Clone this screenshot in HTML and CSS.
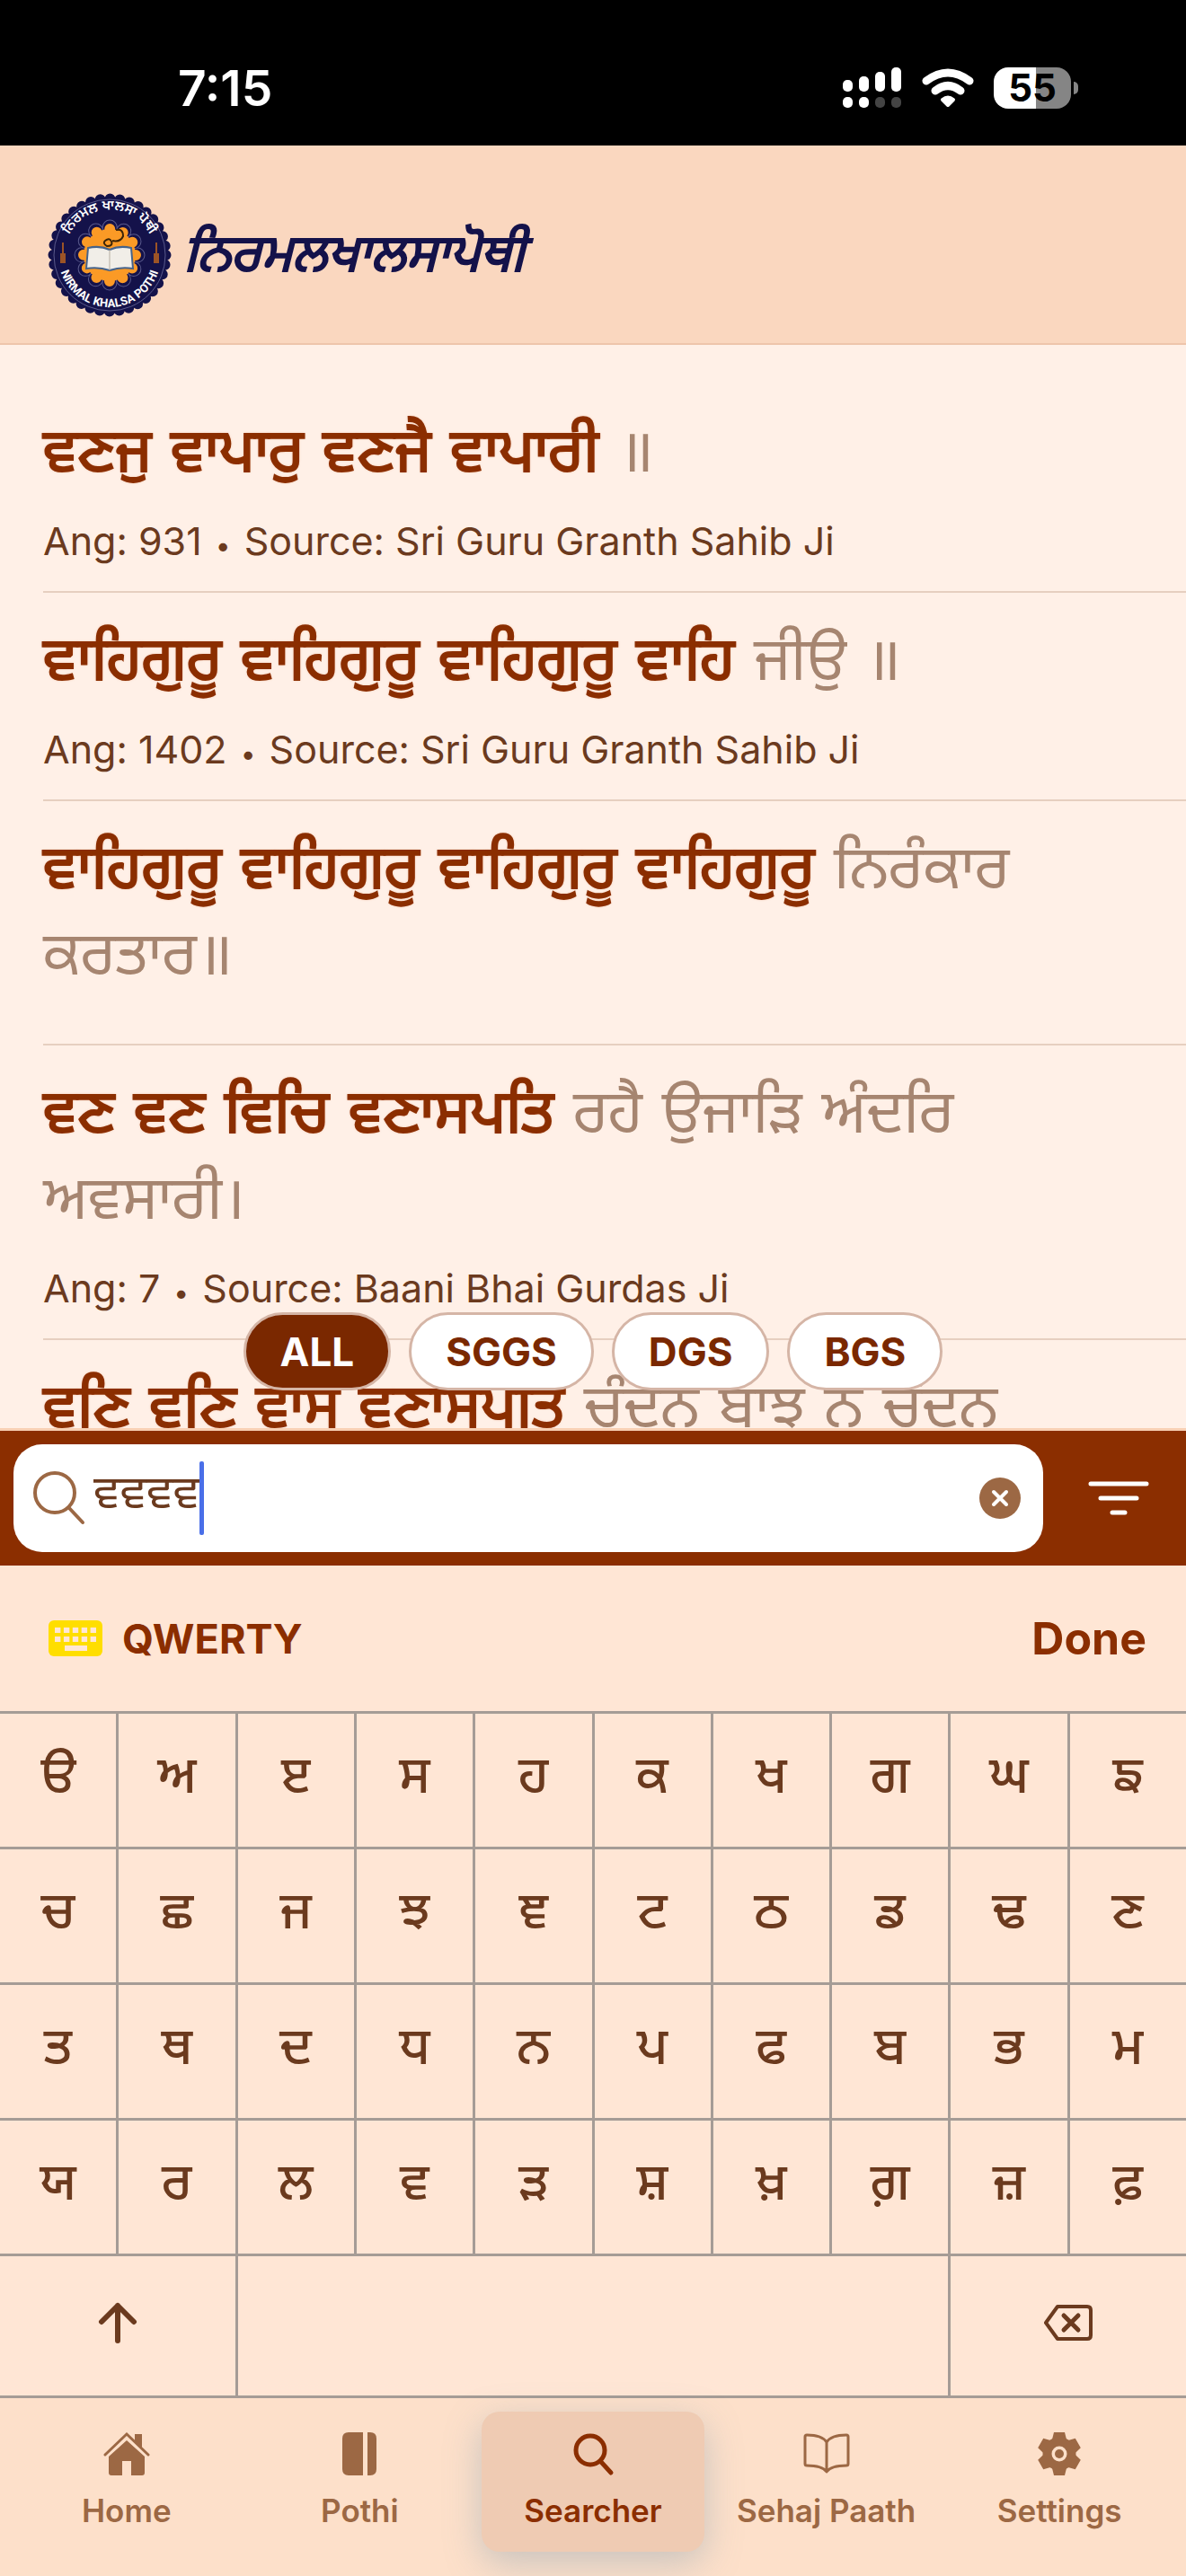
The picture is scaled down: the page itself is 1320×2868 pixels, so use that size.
FILE: index.html
```html
<!DOCTYPE html>
<html lang="pa">
<head>
    <meta charset="UTF-8">
    <meta name="viewport" content="width=device-width, initial-scale=1.0">
    <title>Nirmal Khalsa Pothi</title>
    <link rel="stylesheet" href="styles.css">
</head>
<body>

    <div class="status">
        <span class="clock">7:15</span>
        <svg class="signal" viewBox="0 0 66 46" fill="#fff">
            <rect x="0" y="14" width="11" height="13" rx="5"/>
            <rect x="18" y="10" width="11" height="17" rx="5"/>
            <rect x="36" y="5" width="11" height="22" rx="5"/>
            <rect x="54" y="0" width="11" height="27" rx="5"/>
            <rect x="0" y="33" width="11" height="12" rx="5"/>
            <rect x="18" y="33" width="11" height="12" rx="5"/>
            <rect x="36" y="33" width="11" height="12" rx="5" fill="#444"/>
            <rect x="54" y="33" width="11" height="12" rx="5" fill="#444"/>
        </svg>
        <svg class="wifi" viewBox="0 0 58 44" fill="none" stroke="#fff" stroke-width="9" stroke-linecap="round">
            <path d="M5 14Q29-4 53 14M15 25Q29 14 43 25"/>
            <path d="M29 41l-6-6q6-5 12 0z" fill="#fff" stroke-width="4" stroke-linejoin="round"/>
        </svg>
        <span class="battery">55</span>
        <span class="battery-tip"></span>
    </div>

    <header class="header">
        <svg class="emblem" viewBox="-70 -70 140 140">
            <circle r="62.500" fill="none" stroke="#14124a" stroke-width="12" stroke-linecap="round" stroke-dasharray="0 10.908"/>
            <circle r="62" fill="#14124a" stroke="#5a5a8c" stroke-width="1"/>
            <circle r="31" fill="none" stroke="#5a5a8c" stroke-width="17" stroke-linecap="round" stroke-dasharray="0 16.231"/>
            <circle r="31" fill="none" stroke="#14124a" stroke-width="15" stroke-linecap="round" stroke-dasharray="0 16.231"/>
            <circle r="29" fill="#fb9a26"/>
            <circle r="29" fill="none" stroke="#fb9a26" stroke-width="12" stroke-linecap="round" stroke-dasharray="0 15.184"/>
            <path d="M-24-8q13-3 24 2 11-5 24-2l2 23q-14-2-26 2-12-4-26-2z" fill="#f1eee8" stroke="#46638a" stroke-width="2"/>
            <path d="M0-6v23" stroke="#b5ada0" stroke-width="1"/>
            <path d="M-5-16q5-4 7 1t-5 5q-5-3-2-6M3-16q9 2 12-5 0-9-8-7" fill="none" stroke="#3b2408" stroke-width="2"/>
            <path d="M-52-14v14M52-14v14" stroke="#9c5426" stroke-width="2"/>
            <path d="M-52-2v11M52-2v11" stroke="#9c5426" stroke-width="6"/>
            <path id="arcTop" d="M-46-20A50 50 0 0 1 46-20" fill="none"/>
            <path id="arcBottom" d="M-55 16A57 57 0 0 0 55 16" fill="none"/>
            <text class="seal-pa" text-anchor="middle"><textPath href="#arcTop" startOffset="50%">ਨਿਰਮਲ ਖਾਲਸਾ ਪੋਥੀ</textPath></text>
            <text class="seal-en" text-anchor="middle"><textPath href="#arcBottom" startOffset="50%">NIRMAL KHALSA POTHI</textPath></text>
        </svg>
        <h1 class="brand">ਨਿਰਮਲਖਾਲਸਾਪੋਥੀ</h1>
    </header>

    <main class="results">
        <article class="result">
            <p class="line"><b>ਵਣਜੁ ਵਾਪਾਰੁ ਵਣਜੈ ਵਾਪਾਰੀ</b> ॥</p>
            <p class="meta">Ang: 931 <i>•</i> Source: Sri Guru Granth Sahib Ji</p>
        </article>
        <article class="result">
            <p class="line"><b>ਵਾਹਿਗੁਰੂ ਵਾਹਿਗੁਰੂ ਵਾਹਿਗੁਰੂ ਵਾਹਿ</b> ਜੀਉ ॥</p>
            <p class="meta">Ang: 1402 <i>•</i> Source: Sri Guru Granth Sahib Ji</p>
        </article>
        <article class="result">
            <p class="line"><b>ਵਾਹਿਗੁਰੂ ਵਾਹਿਗੁਰੂ ਵਾਹਿਗੁਰੂ ਵਾਹਿਗੁਰੂ</b> ਨਿਰੰਕਾਰ<br>ਕਰਤਾਰ॥</p>
        </article>
        <article class="result">
            <p class="line"><b>ਵਣ ਵਣ ਵਿਚਿ ਵਣਾਸਪਤਿ</b> ਰਹੈ ਉਜਾੜਿ ਅੰਦਰਿ<br>ਅਵਸਾਰੀ।</p>
            <p class="meta">Ang: 7 <i>•</i> Source: Baani Bhai Gurdas Ji</p>
        </article>
        <article class="result">
            <p class="line"><b>ਵਣਿ ਵਣਿ ਵਾਸੁ ਵਣਾਸਪਤਿ</b> ਚੰਦਨੁ ਬਾਝੁ ਨ ਚੰਦਨੁ</p>
        </article>
        <div class="filters">
            <button class="pill active" type="button">ALL</button>
            <button class="pill" type="button">SGGS</button>
            <button class="pill" type="button">DGS</button>
            <button class="pill" type="button">BGS</button>
        </div>
    </main>

    <form class="search">
        <label class="search-box">
            <svg class="glass" viewBox="0 0 58 60" fill="none" stroke="#9c6844" stroke-width="4" stroke-linecap="round">
                <circle cx="24" cy="24" r="22"/><path d="M40 41l15 16"/>
            </svg>
            <input class="query" type="text" value="ਵਵਵਵ" aria-label="Search">
            <span class="caret"></span>
            <button class="clear" type="button" aria-label="Clear">
                <svg viewBox="0 0 46 46"><circle cx="23" cy="23" r="23" fill="#9c6844"/><path d="M16 16l14 14M30 16L16 30" stroke="#fff" stroke-width="4" stroke-linecap="round"/></svg>
            </button>
        </label>
        <button class="sort" type="button" aria-label="Filter">
            <svg viewBox="0 0 68 38" stroke="#fff" stroke-width="5" stroke-linecap="round"><path d="M3 3h62M14 19h40M27 35h14"/></svg>
        </button>
    </form>

    <section class="keyboard">
        <div class="keyboard-bar">
            <button class="layout" type="button">
                <svg viewBox="0 0 60 40"><rect width="60" height="40" rx="6" fill="#ffde00"/><path d="M7 11h46M7 21h46" stroke="#ffe6d5" stroke-width="6" stroke-dasharray="6.4 3.5"/><path d="M18 31h25" stroke="#ffe6d5" stroke-width="6"/></svg>
                QWERTY
            </button>
            <button class="done" type="button">Done</button>
        </div>
        <div class="keys">
            <button>ੳ</button><button>ਅ</button><button>ੲ</button><button>ਸ</button><button>ਹ</button><button>ਕ</button><button>ਖ</button><button>ਗ</button><button>ਘ</button><button>ਙ</button>
            <button>ਚ</button><button>ਛ</button><button>ਜ</button><button>ਝ</button><button>ਞ</button><button>ਟ</button><button>ਠ</button><button>ਡ</button><button>ਢ</button><button>ਣ</button>
            <button>ਤ</button><button>ਥ</button><button>ਦ</button><button>ਧ</button><button>ਨ</button><button>ਪ</button><button>ਫ</button><button>ਬ</button><button>ਭ</button><button>ਮ</button>
            <button>ਯ</button><button>ਰ</button><button>ਲ</button><button>ਵ</button><button>ੜ</button><button>ਸ਼</button><button>ਖ਼</button><button>ਗ਼</button><button>ਜ਼</button><button>ਫ਼</button>
            <button class="shift" aria-label="Shift">
                <svg viewBox="0 0 44 46" fill="none" stroke="#6b3a1e" stroke-width="6" stroke-linecap="round" stroke-linejoin="round"><path d="M22 43V4M4 22L22 4l18 18"/></svg>
            </button>
            <button class="space" aria-label="Space"></button>
            <button class="delete" aria-label="Delete">
                <svg viewBox="0 0 54 40" fill="none" stroke="#6b3a1e" stroke-width="4" stroke-linecap="round" stroke-linejoin="round"><path d="M15 2h33q4 0 4 4v28q0 4-4 4H15L2 20z"/><path d="M22 12l16 16M38 12L22 28" stroke-width="5"/></svg>
            </button>
        </div>
    </section>

    <nav class="tabs">
        <a class="tab" href="#">
            <svg viewBox="0 0 52 52" fill="#9c6844"><path d="M26 11L46 29v18q0 3-3 3H31V34H21v16H9q-3 0-3-3V29z"/><path d="M2 27L26 4l24 23" fill="none" stroke="#9c6844" stroke-width="3" stroke-linecap="round"/><path d="M35 4h8v16l-8-8z"/></svg>
            Home
        </a>
        <a class="tab" href="#">
            <svg viewBox="0 0 52 52" fill="#9c6844"><path d="M14 2h16v48H14q-7 0-7-7V9q0-7 7-7zM35 2h3q7 0 7 7v34q0 7-7 7h-3z"/></svg>
            Pothi
        </a>
        <a class="tab current" href="#">
            <svg viewBox="0 0 52 52" fill="none" stroke="#8b2e00" stroke-width="5" stroke-linecap="round"><circle cx="23" cy="22" r="16"/><path d="M35 35l11 12"/></svg>
            Searcher
        </a>
        <a class="tab" href="#">
            <svg viewBox="0 0 52 52" fill="none" stroke="#9c6844" stroke-width="3" stroke-linejoin="round"><path d="M26 13Q21 5 4 5q-2 0-2 2v30q0 2 2 2 17 0 22 7 5-7 22-7 2 0 2-2V7q0-2-2-2Q31 5 26 13zv32"/></svg>
            Sehaj Paath
        </a>
        <a class="tab" href="#">
            <svg viewBox="-26 -26 52 52" fill="#9c6844"><circle r="13.500" fill="none" stroke="#9c6844" stroke-width="10"/><circle r="5"/><path id="teeth" d="M-8-16l2-8H6l2 8zM-8 16l2 8H6l2-8z"/><use href="#teeth" transform="rotate(60)"/><use href="#teeth" transform="rotate(120)"/></svg>
            Settings
        </a>
    </nav>

</body>
</html>
```
FILE: styles.css
```css
* {
    box-sizing: border-box;
}

body {
    margin: 0;
    height: 100vh;
    display: flex;
    flex-direction: column;
    font-family: Inter, "Noto Sans", sans-serif;
    background-color: #fff0e7;
    color: #6b3a1e;
}

button {
    margin: 0;
    padding: 0;
    border: none;
    background: none;
    font-family: inherit;
    color: inherit;
    cursor: pointer;
}

svg {
    display: block;
}

/* status bar */
.status {
    flex: none;
    height: 162px;
    padding: 34px 120px 0 198px;
    display: flex;
    align-items: center;
    background-color: #000;
    color: #fff;
}

.clock {
    flex: 1;
    font-size: 55px;
    font-weight: 600;
}

.signal {
    width: 66px;
    height: 46px;
}

.wifi {
    width: 58px;
    height: 44px;
    margin: 0 22px;
}

.battery {
    width: 86px;
    height: 46px;
    border-radius: 16px;
    background: linear-gradient(to right, #fff 55%, #858585 55%);
    color: #000;
    font-size: 42px;
    font-weight: 700;
    line-height: 46px;
    text-align: center;
}

.battery-tip {
    width: 5px;
    height: 14px;
    margin-left: 3px;
    border-radius: 0 5px 5px 0;
    background-color: #858585;
}

/* header */
.header {
    flex: none;
    height: 222px;
    padding: 24px 52px 0;
    display: flex;
    align-items: center;
    gap: 12px;
    background-color: #fad7bf;
    border-bottom: 2px solid #eec5ab;
}

.emblem {
    width: 140px;
    height: 140px;
}

.seal-pa {
    font-family: "Noto Sans Gurmukhi", sans-serif;
    font-size: 15px;
    font-weight: 600;
    fill: #fff;
}

.seal-en {
    font-family: "Liberation Sans Narrow", Roboto, sans-serif;
    font-size: 13px;
    font-weight: 700;
    fill: #fff;
}

.brand {
    margin: 0;
    padding-top: 8px;
    font-family: "Noto Sans Gurmukhi", "Noto Sans", sans-serif;
    font-size: 58px;
    font-style: italic;
    font-weight: 400;
    color: #14124a;
    -webkit-text-stroke: 2px #14124a;
}

/* search results */
.results {
    position: relative;
    flex: 1;
    min-height: 0;
    padding: 44px 0 0 48px;
    overflow: hidden;
    border-bottom: 3px solid #f8d0b4;
}

.result {
    padding: 26px 0 52px;
    border-bottom: 2px solid #e6cfc0;
}

.result:has(.meta) {
    padding-bottom: 30px;
}

.line {
    margin: 0;
    font-family: "DejaVu Sans", "Noto Sans Gurmukhi", "Noto Sans", sans-serif;
    font-size: 67px;
    line-height: 96px;
    color: #a68570;
}

.line b {
    font-weight: 400;
    color: #8b2e00;
    -webkit-text-stroke: 2px #8b2e00;
    text-shadow: 0 0 3px rgba(220, 90, 30, 0.5);
}

.meta {
    margin: 26px 0 0;
    font-size: 43px;
    line-height: 52px;
}

.meta i {
    margin: 0 3px;
    font-size: 30px;
    font-style: normal;
    line-height: 1;
}

.filters {
    position: absolute;
    left: 0;
    right: 0;
    bottom: 42px;
    display: flex;
    justify-content: center;
    gap: 20px;
}

.pill {
    height: 87px;
    padding: 0 38px;
    border: 3px solid #d5b5a6;
    border-radius: 44px;
    background-color: #fff;
    color: #7a2800;
    font-size: 44px;
    font-weight: 700;
}

.pill.active {
    background-color: #7a2800;
    color: #fff;
}

/* search field */
.search {
    flex: none;
    height: 150px;
    padding: 0 15px;
    display: flex;
    align-items: center;
    background-color: #8b2e00;
}

.search-box {
    flex: 1;
    height: 120px;
    padding: 0 25px 0 22px;
    display: flex;
    align-items: center;
    border-radius: 32px;
    background-color: #fff;
}

.glass {
    width: 58px;
    height: 60px;
}

.query {
    field-sizing: content;
    margin-left: 9px;
    padding: 0 0 4px;
    border: none;
    outline: none;
    background: none;
    color: #6b3a1e;
    font-family: "Noto Sans Gurmukhi", "Noto Sans", sans-serif;
    font-size: 52px;
}

.caret {
    width: 5px;
    height: 82px;
    border-radius: 2px;
    background-color: #4a6fe8;
}

.clear {
    margin-left: auto;
}

.clear svg {
    width: 46px;
    height: 46px;
}

.sort {
    padding: 0 26px 0 50px;
}

.sort svg {
    width: 68px;
    height: 38px;
}

/* keyboard */
.keyboard {
    flex: none;
    background-color: #ffe6d5;
}

.keyboard-bar {
    height: 162px;
    padding: 0 44px 0 54px;
    display: flex;
    align-items: center;
    justify-content: space-between;
    color: #8b2e00;
}

.layout {
    display: flex;
    align-items: center;
    gap: 22px;
    font-size: 45px;
    font-weight: 700;
}

.layout svg {
    width: 60px;
    height: 40px;
}

.done {
    font-size: 50px;
    font-weight: 700;
}

.keys {
    display: grid;
    grid-template-columns: repeat(10, 1fr);
    grid-template-rows: repeat(4, 148px) 155px;
    gap: 3px;
    padding: 3px 0;
    background-color: #a59c96;
}

.keys button {
    display: flex;
    align-items: center;
    justify-content: center;
    background-color: #ffe6d5;
    font-family: "Noto Sans Gurmukhi", "Noto Sans", sans-serif;
    font-size: 57px;
    font-weight: 500;
}

.keys .shift,
.keys .delete {
    grid-column: span 2;
    padding-bottom: 8px;
}

.keys .space {
    grid-column: span 6;
}

.shift svg {
    width: 44px;
    height: 46px;
}

.delete svg {
    width: 54px;
    height: 40px;
}

/* bottom tabs */
.tabs {
    flex: none;
    height: 198px;
    padding: 15px 11px 27px;
    display: grid;
    grid-template-columns: repeat(5, 1fr);
    background-color: #fde0ca;
}

.tab {
    margin: 0 6px;
    padding-top: 21px;
    display: flex;
    flex-direction: column;
    align-items: center;
    gap: 16px;
    border-radius: 20px;
    color: #9c6844;
    font-size: 35px;
    font-weight: 600;
    line-height: 42px;
    text-decoration: none;
    white-space: nowrap;
}

.tab svg {
    width: 52px;
    height: 52px;
}

.tab.current {
    background-color: #efcbb3;
    color: #8b2e00;
    box-shadow: 0 12px 40px rgba(100, 140, 170, 0.35);
}
```
